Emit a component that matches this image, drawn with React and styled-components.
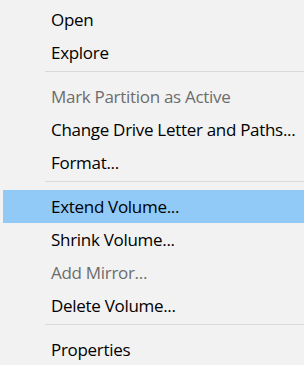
import React from "react";
import styled, { createGlobalStyle } from "styled-components";

const Global = createGlobalStyle`
  html, body { margin: 0; padding: 0; background: #f2f2f2; }
  #root { width: 304px; height: 365px; overflow: hidden; }
`;

const Menu = styled.ul`
  list-style: none;
  margin: 0;
  padding: 3px 0 0 3px;
  width: 304px;
  height: 365px;
  box-sizing: border-box;
  background: #f2f2f2;
  font-family: "Open Sans", "Noto Sans", sans-serif;
  font-size: 17px;
  display: flex;
  flex-direction: column;
`;

const Item = styled.li`
  height: 33px;
  flex: none;
  display: flex;
  align-items: center;
  padding-left: 48px;
  color: ${(p) => (p.$disabled ? "#6d6d6d" : "#000")};
  background: ${(p) => (p.$active ? "#91c9f7" : "transparent")};
  white-space: nowrap;
  letter-spacing: -0.3px;
`;

const Separator = styled.li`
  flex: none;
  height: 1px;
  margin: 2px 0 8px 42px;
  background: #dadada;
`;

const items = [
  { label: "Open" },
  { label: "Explore" },
  { sep: true },
  { label: "Mark Partition as Active", disabled: true },
  { label: "Change Drive Letter and Paths..." },
  { label: "Format..." },
  { sep: true },
  { label: "Extend Volume...", active: true },
  { label: "Shrink Volume..." },
  { label: "Add Mirror...", disabled: true },
  { label: "Delete Volume..." },
  { sep: true },
  { label: "Properties" },
];

export default function App() {
  return (
    <>
      <Global />
      <Menu>
        {items.map((it, i) =>
          it.sep ? (
            <Separator key={i} />
          ) : (
            <Item key={i} $disabled={it.disabled} $active={it.active}>
              {it.label}
            </Item>
          )
        )}
      </Menu>
    </>
  );
}
